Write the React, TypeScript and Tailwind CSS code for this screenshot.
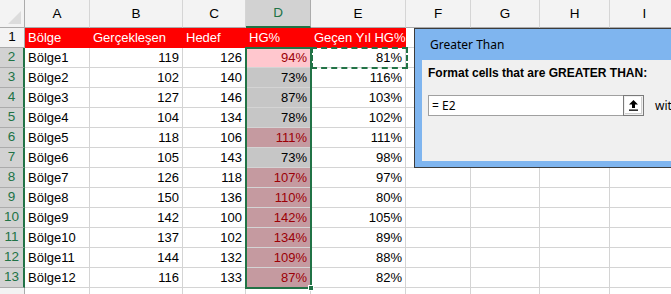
import { type ReactNode } from "react";

const ROWS = [
  ["Bölge1", 119, 126, "94%", "81%"],
  ["Bölge2", 102, 140, "73%", "116%"],
  ["Bölge3", 127, 146, "87%", "103%"],
  ["Bölge4", 104, 134, "78%", "102%"],
  ["Bölge5", 118, 106, "111%", "111%"],
  ["Bölge6", 105, 143, "73%", "98%"],
  ["Bölge7", 126, 118, "107%", "97%"],
  ["Bölge8", 150, 136, "110%", "80%"],
  ["Bölge9", 142, 100, "142%", "105%"],
  ["Bölge10", 137, 102, "134%", "89%"],
  ["Bölge11", 144, 132, "109%", "88%"],
  ["Bölge12", 116, 133, "87%", "82%"],
] as const;

// which D cells got the "greater than" format
const HIT = [true, false, false, false, true, false, true, true, true, true, true, true];

const COLS = ["A", "B", "C", "D", "E", "F", "G", "H", "I"];

function Cell({ className = "", children }: { className?: string; children?: ReactNode }) {
  return (
    <div className={`h-[20px] border-r border-b border-[#d4d4d4] px-[3px] flex items-center whitespace-nowrap overflow-hidden ${className}`}>
      {children}
    </div>
  );
}

function dFill(i: number) {
  if (i === 0) return "bg-[#ffc7ce] text-[#9c0006]";
  if (HIT[i]) return "bg-[#c59aa0] text-[#9c0006]";
  return "bg-[#c6c6c6] text-black";
}

function UpArrow() {
  return (
    <svg width="11" height="12" viewBox="0 0 11 12">
      <path d="M5.5 1 L10 5.5 L7 5.5 L7 9 L4 9 L4 5.5 L1 5.5 Z" fill="#000" />
      <rect x="1" y="10.5" width="9" height="1.3" fill="#000" />
    </svg>
  );
}

export default function App() {
  return (
    <div className="relative w-[671px] h-[294px] overflow-hidden bg-white text-[13px] text-black font-['Liberation_Sans',Arial,sans-serif]">
      <div className="grid grid-cols-[25px_65px_93px_63px_65px_95px_65px_69px_70px_70px]">
        {/* column headers */}
        <div className="relative h-[28px] bg-[#f3f3f3] border-r border-b border-[#ababab]">
          <div className="absolute right-[3px] bottom-[3px] w-0 h-0 border-l-[13px] border-l-transparent border-b-[13px] border-b-[#dcdcdc]" />
        </div>
        {COLS.map((c) => (
          <div
            key={c}
            className={`h-[28px] flex items-end justify-center pb-[3px] border-r text-[13.5px] ${
              c === "D"
                ? "bg-[#d2d2d2] text-[#217346] border-r-[#ababab] border-b-2 border-b-[#217346]"
                : "bg-[#f3f3f3] border-r-[#d5d5d5] border-b border-b-[#ababab]"
            }`}
          >
            {c}
          </div>
        ))}

        {/* row 1 */}
        <div className="h-[20px] bg-[#f3f3f3] border-r border-b border-[#ababab] flex items-center justify-center text-[13.5px]">1</div>
        {["Bölge", "Gerçekleşen", "Hedef", "HG%", "Geçen Yıl HG%"].map((h) => (
          <div key={h} className="h-[20px] bg-[#ff0000] text-white border-b border-[#ff0000] px-[3px] flex items-center whitespace-nowrap">
            {h}
          </div>
        ))}
        <Cell />
        <Cell />
        <Cell />
        <Cell />

        {ROWS.map((r, i) => (
          <div key={i} className="contents">
            <div className="h-[20px] bg-[#d2d2d2] text-[#217346] border-b border-[#ababab] border-r-2 border-r-[#217346] flex items-center justify-center text-[13.5px]">
              {i + 2}
            </div>
            <Cell>{r[0]}</Cell>
            <Cell className="justify-end">{r[1]}</Cell>
            <Cell className="justify-end">{r[2]}</Cell>
            <Cell className={`justify-end ${dFill(i)}`}>{r[3]}</Cell>
            <Cell className="justify-end">{r[4]}</Cell>
            <Cell />
            <Cell />
            <Cell />
            <Cell />
          </div>
        ))}

        {/* row 14, partly visible */}
        <div className="h-[20px] bg-[#f3f3f3] border-r border-b border-[#ababab]" />
        {COLS.map((c) => (
          <Cell key={c} />
        ))}
      </div>

      {/* selection D2:D13 */}
      <div className="absolute left-[245px] top-[47px] w-[67px] h-[242px] border-2 border-[#217346]" />
      <div className="absolute left-[308px] top-[285px] w-[6px] h-[6px] bg-[#217346] border border-white" />

      {/* marching ants on E2 */}
      <div className="absolute left-[311px] top-[47px] w-[97px] h-[22px] border-2 border-dashed border-[#217346]" />

      {/* Greater Than dialog */}
      <div className="absolute left-[414px] top-[28px] w-[270px] h-[140px] border border-[#3c3c3c] bg-[#7fb5ef] flex flex-col font-['Noto_Sans',sans-serif]">
        <div className="h-[31px] pl-[15px] flex items-center text-[12px] text-black">Greater Than</div>
        <div className="ml-[7px] mb-[6px] flex-1 bg-[#f0f0f0] pl-[6px] pt-[4px]">
          <div className="text-[12px] font-bold font-['Liberation_Sans',Arial,sans-serif] h-[18px] flex items-center">
            Format cells that are GREATER THAN:
          </div>
          <div className="mt-[13px] flex items-center">
            <div className="w-[216px] h-[21px] bg-white border border-[#a0a0a0] flex items-center">
              <span className="flex-1 pl-[3px] text-[12px]">= E2</span>
              <div className="w-[21px] h-[21px] -mr-px border border-[#7a7a7a] bg-[#f0f0f0] flex items-center justify-center">
                <div className="w-[17px] h-[17px] bg-white border-b border-r border-[#cfcfcf] flex items-center justify-center">
                  <UpArrow />
                </div>
              </div>
            </div>
            <span className="ml-[11px] text-[12px]">with</span>
          </div>
        </div>
      </div>
    </div>
  );
}
